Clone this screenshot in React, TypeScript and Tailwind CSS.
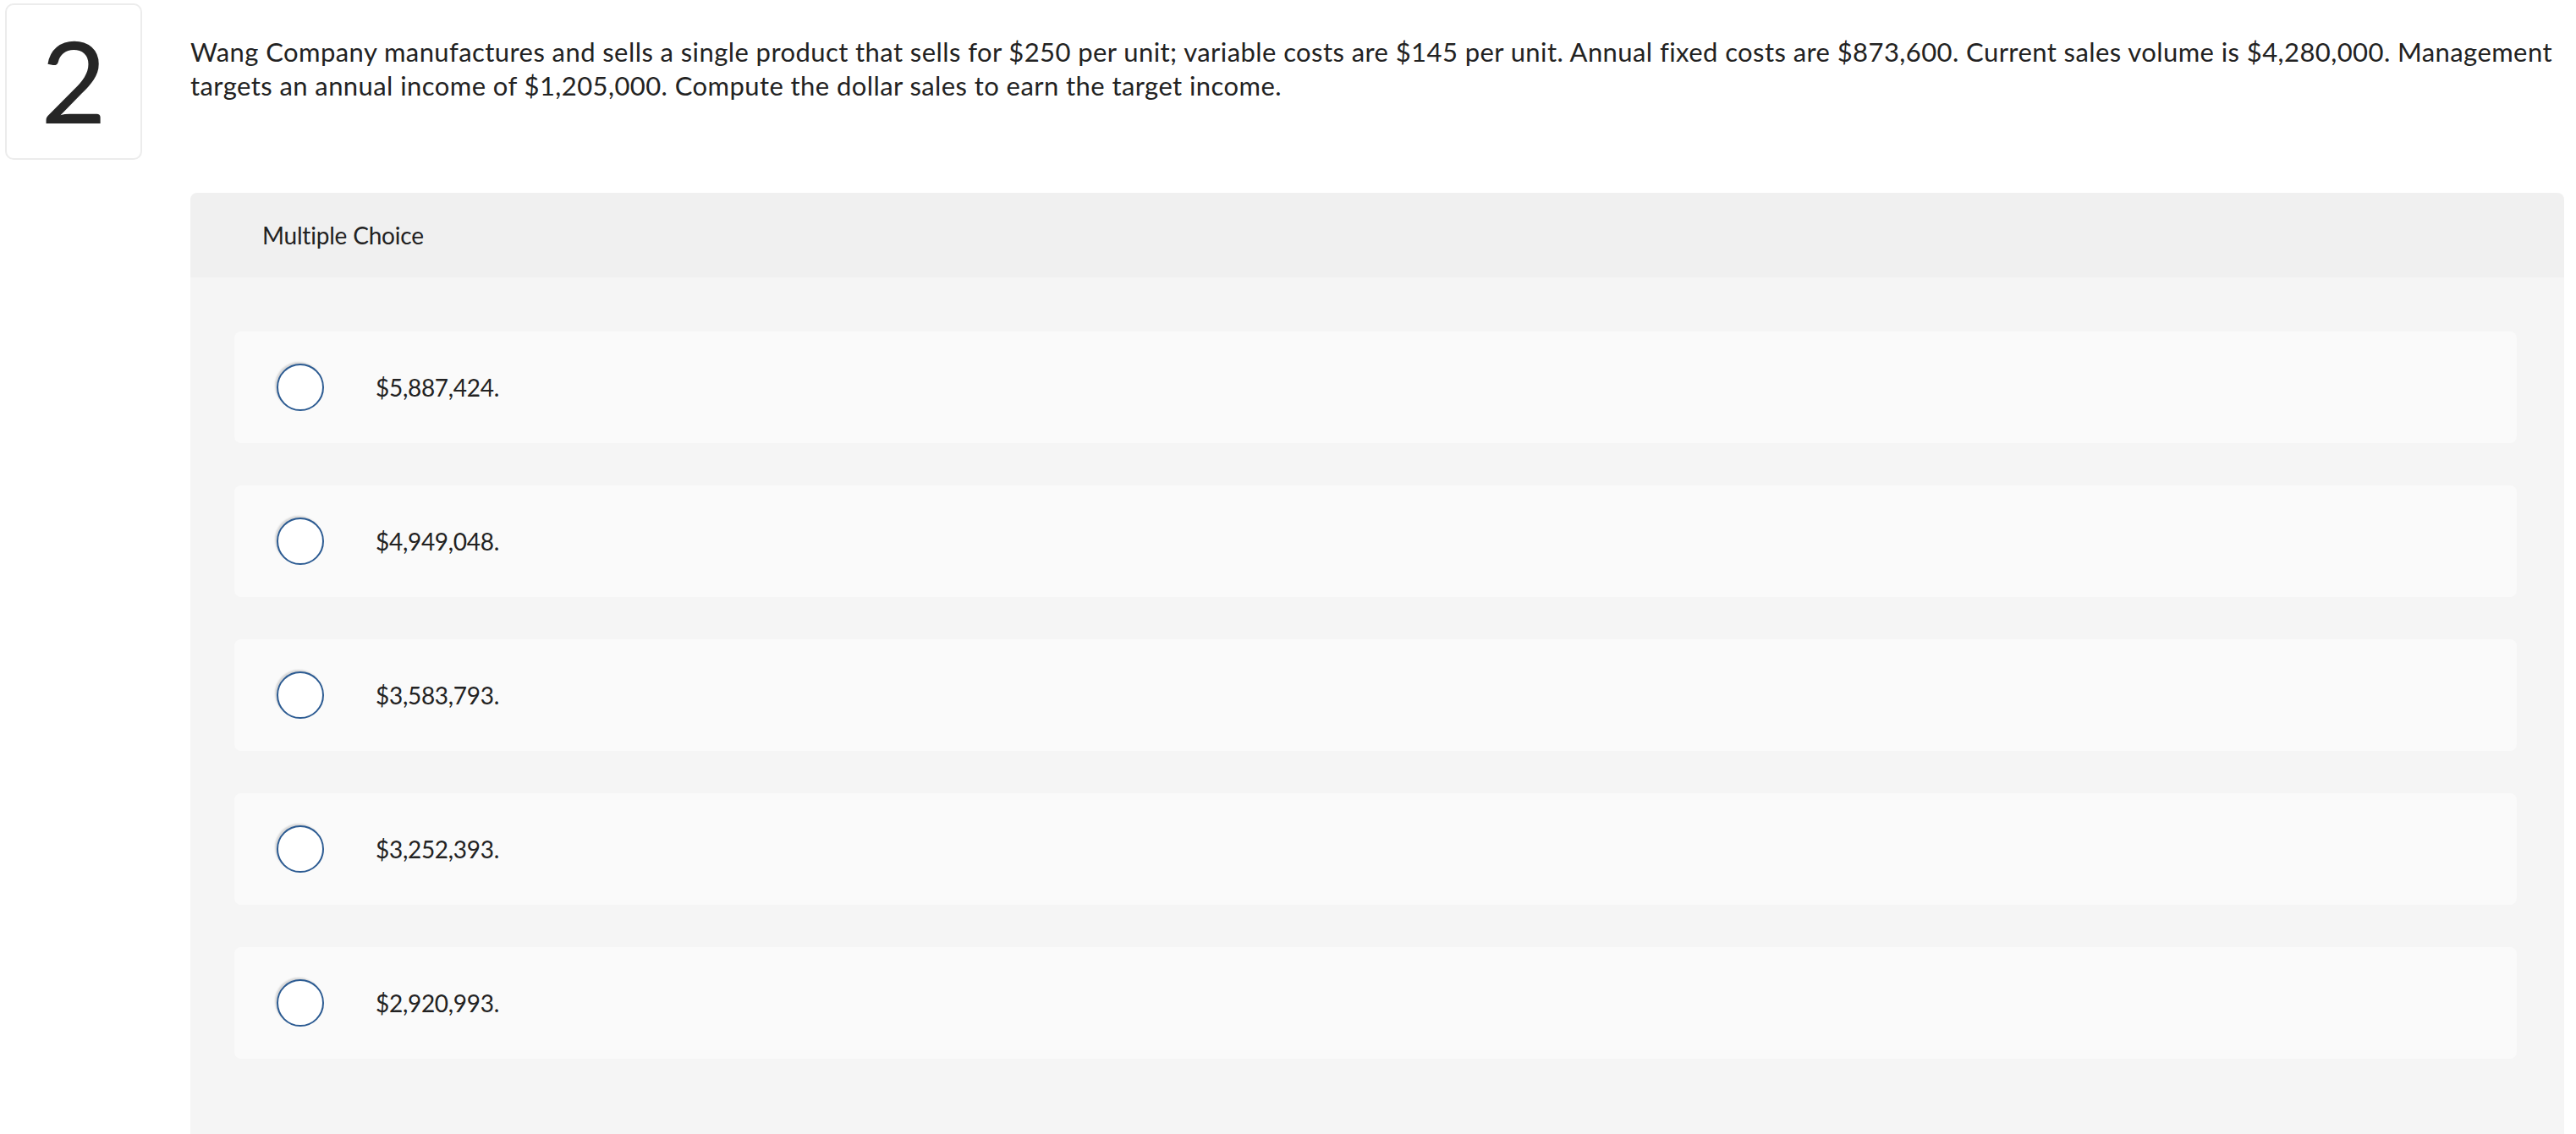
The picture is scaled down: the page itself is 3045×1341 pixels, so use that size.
const choices = ["$5,887,424.", "$4,949,048.", "$3,583,793.", "$3,252,393.", "$2,920,993."];

function Radio() {
  return (
    <span className="block h-[56px] w-[56px] shrink-0 rounded-full border-2 border-[#2c5b92] bg-white shadow-[-2px_-2px_2px_rgba(0,0,0,0.14)]" />
  );
}

export default function App() {
  return (
    <div className="min-h-screen bg-white font-['Lato',sans-serif] text-[#222222]">
      <div className="flex pl-[6px] pr-[14px] pt-[4px]">
        <div className="flex h-[185px] w-[162px] shrink-0 items-center justify-center rounded-[10px] border-2 border-[#ececec] pb-[4px]">
          <span className="text-[134px] font-normal leading-none text-[#262626]">2</span>
        </div>
        <div className="ml-[57px] flex-1">
          <p className="pt-[37px] text-[31px] leading-[40px] tracking-[0.42px]">
            Wang Company manufactures and sells a single product that sells for $250 per unit; variable costs are $145 per unit. Annual fixed costs are $873,600. Current sales volume is $4,280,000. Management targets an annual income of $1,205,000. Compute the dollar sales to earn the target income.
          </p>
          <section className="mt-[107px] overflow-hidden rounded-t-[8px]">
            <div className="flex h-[100px] items-center bg-[#f0f0f0] px-[85px]">
              <span className="text-[28px] tracking-[-0.2px]">Multiple Choice</span>
            </div>
            <div className="flex flex-col gap-[50px] bg-[#f5f5f5] pb-[120px] pl-[52px] pr-[56px] pt-[64px]">
              {choices.map((c) => (
                <label key={c} className="flex h-[132px] items-center rounded-[8px] bg-[#fafafa] pl-[50px]">
                  <Radio />
                  <span className="ml-[61px] text-[28px] tracking-[-0.3px]">{c}</span>
                </label>
              ))}
            </div>
          </section>
        </div>
      </div>
    </div>
  );
}
